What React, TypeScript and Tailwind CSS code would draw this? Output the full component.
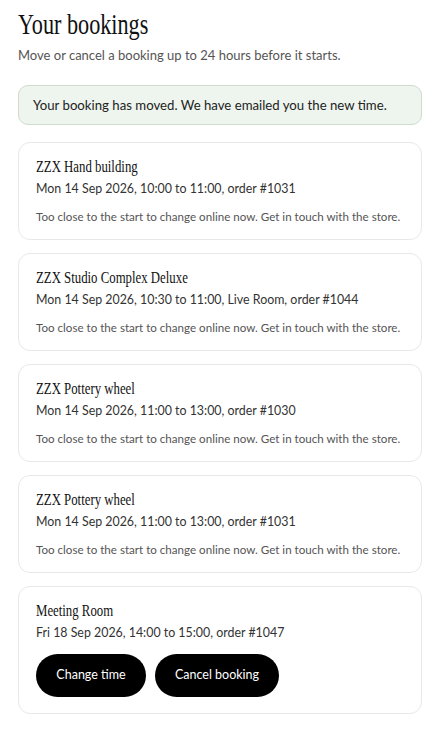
import React from "react";

type Booking = { title: string; when: string; locked: boolean };

const bookings: Booking[] = [
  { title: "ZZX Hand building", when: "Mon 14 Sep 2026, 10:00 to 11:00, order #1031", locked: true },
  { title: "ZZX Studio Complex Deluxe", when: "Mon 14 Sep 2026, 10:30 to 11:00, Live Room, order #1044", locked: true },
  { title: "ZZX Pottery wheel", when: "Mon 14 Sep 2026, 11:00 to 13:00, order #1030", locked: true },
  { title: "ZZX Pottery wheel", when: "Mon 14 Sep 2026, 11:00 to 13:00, order #1031", locked: true },
  { title: "Meeting Room", when: "Fri 18 Sep 2026, 14:00 to 15:00, order #1047", locked: false },
];

const serif = "font-['Liberation_Serif',serif]";
const sans = "font-['Lato',sans-serif]";

export default function App() {
  return (
    <div className={`min-h-[730px] w-[440px] bg-white px-[18px] pt-[6px] pb-[16px] ${sans}`}>
      <h1 className={`${serif} text-[30px] leading-[36px] text-[#111] origin-left scale-x-[0.74] inline-block whitespace-nowrap`}>
        Your bookings
      </h1>
      <p className="mt-[4px] text-[13px] leading-[18px] text-[#555]">
        Move or cancel a booking up to 24 hours before it starts.
      </p>
      <div className="mt-[21px] rounded-[10px] border border-[#cddccd] bg-[#eef5ee] px-[14px] py-[10px] text-[13.2px] leading-[18px] text-[#222]">
        Your booking has moved. We have emailed you the new time.
      </div>
      <div className="mt-[17px] flex flex-col gap-[13px]">
        {bookings.map((b, i) => (
          <div
            key={i}
            className={`rounded-[12px] border border-[#e8e8e8] bg-white px-[17px] pt-[13px] ${b.locked ? "pb-[14px]" : "pb-[16px]"}`}
          >
            <div className={`${serif} text-[16px] leading-[22px] text-[#111] origin-left scale-x-[0.8] whitespace-nowrap`}>
              {b.title}
            </div>
            <div className="mt-[2px] text-[12.4px] leading-[18px] text-[#333]">{b.when}</div>
            {b.locked ? (
              <div className="mt-[11px] text-[11.6px] leading-[16px] text-[#555]">
                Too close to the start to change online now. Get in touch with the store.
              </div>
            ) : (
              <div className="mt-[12px] flex gap-[9px]">
                <button className="h-[43px] w-[110px] rounded-full bg-black text-[12.5px] text-white">Change time</button>
                <button className="h-[43px] w-[124px] rounded-full bg-black text-[12.5px] text-white">Cancel booking</button>
              </div>
            )}
          </div>
        ))}
      </div>
    </div>
  );
}
